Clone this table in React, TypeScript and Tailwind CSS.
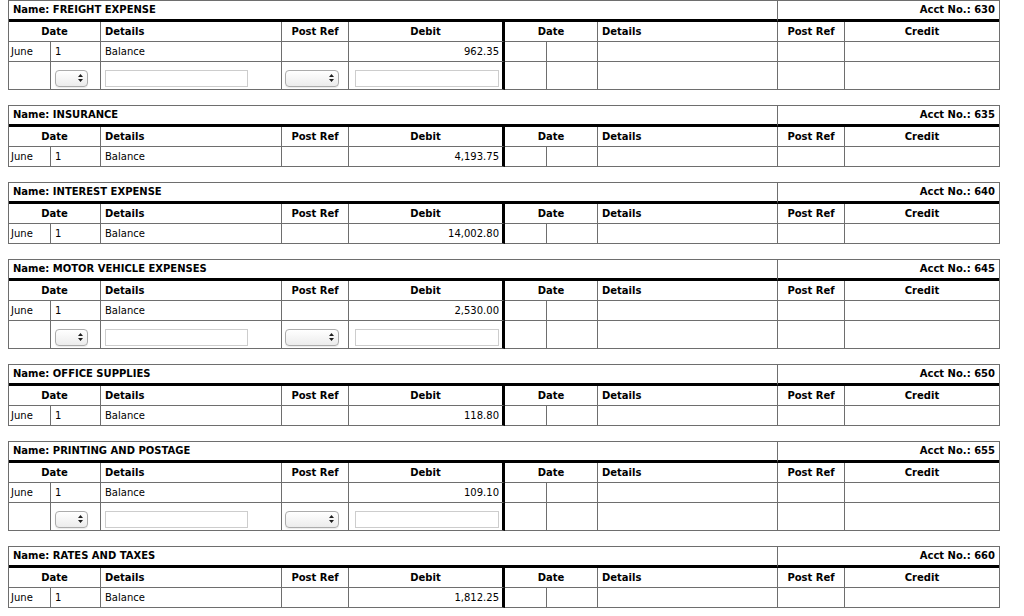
import React from "react";

type Acct = { name: string; no: string; amount: string; inputs: boolean };

const accounts: Acct[] = [
  { name: "FREIGHT EXPENSE", no: "630", amount: "962.35", inputs: true },
  { name: "INSURANCE", no: "635", amount: "4,193.75", inputs: false },
  { name: "INTEREST EXPENSE", no: "640", amount: "14,002.80", inputs: false },
  { name: "MOTOR VEHICLE EXPENSES", no: "645", amount: "2,530.00", inputs: true },
  { name: "OFFICE SUPPLIES", no: "650", amount: "118.80", inputs: false },
  { name: "PRINTING AND POSTAGE", no: "655", amount: "109.10", inputs: true },
  { name: "RATES AND TAXES", no: "660", amount: "1,812.25", inputs: false },
];

function Arrows() {
  return (
    <svg
      className="pointer-events-none absolute right-[5px] top-[4px]"
      width="5"
      height="8"
      viewBox="0 0 5 8"
    >
      <path d="M2.5 0 L5 3 H0 Z M0 5 H5 L2.5 8 Z" fill="#1f1f1f" />
    </svg>
  );
}

function DaySelect() {
  return (
    <div className="relative h-[17px] w-[33px]">
      <select className="h-full w-full appearance-none rounded-[4px] border border-[#acacac] bg-linear-to-b from-white to-[#ececec] shadow-[0_1px_1px_rgba(0,0,0,0.08)] outline-none" />
      <Arrows />
    </div>
  );
}

function RefSelect() {
  return (
    <div className="relative h-[17px] w-[54px]">
      <select className="h-full w-full appearance-none rounded-[4px] border border-[#acacac] bg-linear-to-b from-white to-[#ececec] shadow-[0_1px_1px_rgba(0,0,0,0.08)] outline-none" />
      <Arrows />
    </div>
  );
}

function Ledger({ a }: { a: Acct }) {
  const c = "border-r border-b border-[#6e6e6e]";
  const thick = "border-r-[3px] border-b border-r-black border-b-[#6e6e6e]";
  return (
    <div className="grid w-[992px] grid-cols-[42px_50px_181px_67px_156px_42px_51px_180px_67px_154px] border-l border-t border-r border-[#6e6e6e]">
      {/* name row */}
      <div className="col-span-8 h-[21px] border-r border-b-[3px] border-r-[#6e6e6e] border-b-black pl-[4px] font-bold leading-[18px]">
        Name: {a.name}
      </div>
      <div className="col-span-2 h-[21px] border-b-[3px] border-b-black pr-[4px] text-right font-bold leading-[18px]">
        Acct No.: {a.no}
      </div>

      {/* header row */}
      <div className={`col-span-2 h-[20px] ${c} text-center font-bold leading-[19px]`}>Date</div>
      <div className={`h-[20px] ${c} pl-[4px] font-bold leading-[19px]`}>Details</div>
      <div className={`h-[20px] ${c} text-center font-bold leading-[19px]`}>Post Ref</div>
      <div className={`h-[20px] ${thick} text-center font-bold leading-[19px]`}>Debit</div>
      <div className={`col-span-2 h-[20px] ${c} text-center font-bold leading-[19px]`}>Date</div>
      <div className={`h-[20px] ${c} pl-[4px] font-bold leading-[19px]`}>Details</div>
      <div className={`h-[20px] ${c} text-center font-bold leading-[19px]`}>Post Ref</div>
      <div className="h-[20px] border-b border-[#6e6e6e] text-center font-bold leading-[19px]">Credit</div>

      {/* data row */}
      <div className={`h-[20px] ${c} pl-[2px] leading-[19px]`}>June</div>
      <div className={`h-[20px] ${c} pl-[4px] leading-[19px]`}>1</div>
      <div className={`h-[20px] ${c} pl-[4px] leading-[19px]`}>Balance</div>
      <div className={`h-[20px] ${c}`} />
      <div className={`h-[20px] ${thick} pr-[3px] text-right leading-[19px]`}>{a.amount}</div>
      <div className={`h-[20px] ${c}`} />
      <div className={`h-[20px] ${c}`} />
      <div className={`h-[20px] ${c}`} />
      <div className={`h-[20px] ${c}`} />
      <div className="h-[20px] border-b border-[#6e6e6e]" />

      {a.inputs && (
        <>
          <div className={`h-[28px] ${c}`} />
          <div className={`h-[28px] ${c} pl-[4px] pt-[8px]`}>
            <DaySelect />
          </div>
          <div className={`h-[28px] ${c} pl-[4px] pt-[8px]`}>
            <input type="text" className="block h-[17px] w-[143px] border border-[#cdcdcd] bg-white outline-none" />
          </div>
          <div className={`h-[28px] ${c} pl-[3px] pt-[8px]`}>
            <RefSelect />
          </div>
          <div className={`h-[28px] ${thick} pl-[6px] pt-[8px]`}>
            <input type="text" className="block h-[17px] w-[144px] border border-[#cdcdcd] bg-white outline-none" />
          </div>
          <div className={`h-[28px] ${c}`} />
          <div className={`h-[28px] ${c}`} />
          <div className={`h-[28px] ${c}`} />
          <div className={`h-[28px] ${c}`} />
          <div className="h-[28px] border-b border-[#6e6e6e]" />
        </>
      )}
    </div>
  );
}

export default function App() {
  return (
    <div className="min-h-[616px] w-[1024px] bg-white pl-[8px] font-['DejaVu_Sans',sans-serif] text-[10px] text-black">
      <div className="flex flex-col gap-[15px]">
        {accounts.map((a) => (
          <Ledger key={a.no} a={a} />
        ))}
      </div>
    </div>
  );
}
